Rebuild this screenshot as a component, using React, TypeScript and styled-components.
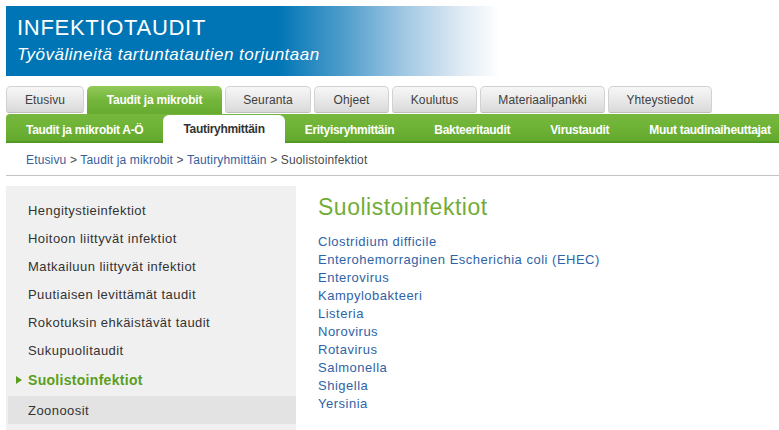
import styled, { createGlobalStyle } from 'styled-components';

const GlobalStyle = createGlobalStyle`
  html, body {
    margin: 0;
    padding: 0;
    background: #ffffff;
    font-family: "Liberation Sans", Arial, sans-serif;
  }
  a {
    text-decoration: none;
  }
`;

const Page = styled.div`
  padding: 6px 0 0 6px;
  width: 773px;
  height: 424px;
  overflow: hidden;
`;

const Banner = styled.header`
  width: 494px;
  height: 70px;
  box-sizing: border-box;
  padding: 9px 0 0 11px;
  color: #ffffff;
  background: linear-gradient(
    to right,
    #0075b5 0%,
    #0075b5 55%,
    #4d9ccb 68%,
    #9dc6e2 80%,
    #dfeaf4 92%,
    #ffffff 100%
  );
`;

const SiteTitle = styled.div`
  font-size: 22px;
  line-height: 26px;
  letter-spacing: 0.7px;
`;

const SiteSubtitle = styled.div`
  margin-top: 3px;
  font-size: 17px;
  line-height: 21px;
  font-style: italic;
  letter-spacing: 0.5px;
`;

const TopTabs = styled.nav`
  display: flex;
  gap: 3px;
  margin-top: 10px;
  height: 28px;
  align-items: flex-end;
`;

const TopTab = styled.a<{ $active?: boolean; $w: number }>`
  display: flex;
  align-items: center;
  justify-content: center;
  box-sizing: border-box;
  width: ${(p) => p.$w}px;
  font-size: 12px;
  letter-spacing: 0.1px;
  border-radius: 5px 5px 3px 3px;
  ${(p) =>
    p.$active
      ? `
    height: 28px;
    border-radius: 5px 5px 0 0;
    color: #ffffff;
    font-weight: bold;
    letter-spacing: -0.2px;
    background: linear-gradient(to bottom, #92ca5a 0%, #74b63c 50%, #66ab30 100%);
  `
      : `
    height: 27px;
    margin-bottom: 1px;
    color: #404040;
    background: linear-gradient(to bottom, #f7f7f7 0%, #e9e9e9 50%, #d9d9d9 100%);
    border: 1px solid #d2d2d2;
    border-bottom-color: #bdbdbd;
  `}
`;

const SubBar = styled.nav`
  display: flex;
  align-items: flex-end;
  height: 29px;
  box-sizing: border-box;
  border-radius: 4px 0 0 0;
  border-bottom: 2px solid #529a24;
  background: linear-gradient(to bottom, #76b83e 0%, #6cb134 60%, #62a82c 100%);
`;

const SubItem = styled.a<{ $active?: boolean }>`
  display: flex;
  align-items: center;
  padding: 0 20px 1px;
  font-size: 12px;
  font-weight: bold;
  letter-spacing: -0.3px;
  white-space: nowrap;
  color: ${(p) => (p.$active ? '#333333' : '#ffffff')};
  background: ${(p) => (p.$active ? '#ffffff' : 'transparent')};
  border-radius: 6px 6px 0 0;
  margin-bottom: -2px;
  height: ${(p) => (p.$active ? '27px' : '25px')};
`;

const Crumbs = styled.div`
  padding: 9px 0 7px 20px;
  font-size: 12px;
  line-height: 16px;
  letter-spacing: 0.15px;
  color: #4a4a4a;
  border-bottom: 1px solid #c4c4c4;
`;

const CrumbLink = styled.a`
  color: #36609c;
`;

const Body = styled.div`
  display: flex;
  margin-top: 10px;
`;

const Sidebar = styled.aside`
  width: 290px;
  height: 250px;
  padding-top: 10px;
  box-sizing: border-box;
  background: #f0f0f0;
  flex-shrink: 0;
`;

const SideItem = styled.a<{ $current?: boolean; $hover?: boolean }>`
  position: relative;
  display: flex;
  align-items: center;
  margin-left: 2px;
  padding-left: 20px;
  height: ${(p) => (p.$current ? '32px' : '28px')};
  font-size: ${(p) => (p.$current ? '14px' : '13px')};
  letter-spacing: ${(p) => (p.$current ? '0.3px' : '0.45px')};
  color: ${(p) => (p.$current ? '#5a9e1c' : '#333333')};
  font-weight: ${(p) => (p.$current ? 'bold' : 'normal')};
  background: ${(p) => (p.$hover ? '#e3e3e3' : 'transparent')};
`;

const Marker = styled.span`
  position: absolute;
  left: 8px;
  top: 12px;
  width: 0;
  height: 0;
  border-top: 4px solid transparent;
  border-bottom: 4px solid transparent;
  border-left: 6px solid #5a9e1c;
`;

const Main = styled.main`
  padding: 8px 0 0 22px;
`;

const Heading = styled.h1`
  margin: 0;
  font-size: 23px;
  line-height: 26px;
  letter-spacing: 0.5px;
  font-weight: normal;
  color: #72ad38;
`;

const LinkList = styled.ul`
  list-style: none;
  margin: 13px 0 0;
  padding: 0;
`;

const LinkRow = styled.li`
  font-size: 13px;
  line-height: 18px;
  letter-spacing: 0.5px;
`;

const ItemLink = styled.a`
  color: #2f63a6;
`;

const topTabs: [string, number][] = [
  ['Etusivu', 78],
  ['Taudit ja mikrobit', 135],
  ['Seuranta', 86],
  ['Ohjeet', 75],
  ['Koulutus', 85],
  ['Materiaalipankki', 125],
  ['Yhteystiedot', 104],
];

const subTabs = [
  'Taudit ja mikrobit A-Ö',
  'Tautiryhmittäin',
  'Erityisryhmittäin',
  'Bakteeritaudit',
  'Virustaudit',
  'Muut taudinaiheuttajat',
];

const sideItems = [
  'Hengitystieinfektiot',
  'Hoitoon liittyvät infektiot',
  'Matkailuun liittyvät infektiot',
  'Puutiaisen levittämät taudit',
  'Rokotuksin ehkäistävät taudit',
  'Sukupuolitaudit',
  'Suolistoinfektiot',
  'Zoonoosit',
];

const links = [
  'Clostridium difficile',
  'Enterohemorraginen Escherichia coli (EHEC)',
  'Enterovirus',
  'Kampylobakteeri',
  'Listeria',
  'Norovirus',
  'Rotavirus',
  'Salmonella',
  'Shigella',
  'Yersinia',
];

export default function App() {
  return (
    <>
      <GlobalStyle />
      <Page>
        <Banner>
          <SiteTitle>INFEKTIOTAUDIT</SiteTitle>
          <SiteSubtitle>Työvälineitä tartuntatautien torjuntaan</SiteSubtitle>
        </Banner>

        <TopTabs>
          {topTabs.map(([t, w]) => (
            <TopTab key={t} href="#" $w={w} $active={t === 'Taudit ja mikrobit'}>
              {t}
            </TopTab>
          ))}
        </TopTabs>

        <SubBar>
          {subTabs.map((t) => (
            <SubItem key={t} href="#" $active={t === 'Tautiryhmittäin'}>
              {t}
            </SubItem>
          ))}
        </SubBar>

        <Crumbs>
          <CrumbLink href="#">Etusivu</CrumbLink> &gt;{' '}
          <CrumbLink href="#">Taudit ja mikrobit</CrumbLink> &gt;{' '}
          <CrumbLink href="#">Tautiryhmittäin</CrumbLink> &gt; Suolistoinfektiot
        </Crumbs>

        <Body>
          <Sidebar>
            {sideItems.map((s) => (
              <SideItem
                key={s}
                href="#"
                $current={s === 'Suolistoinfektiot'}
                $hover={s === 'Zoonoosit'}
              >
                {s === 'Suolistoinfektiot' && <Marker />}
                {s}
              </SideItem>
            ))}
          </Sidebar>

          <Main>
            <Heading>Suolistoinfektiot</Heading>
            <LinkList>
              {links.map((l) => (
                <LinkRow key={l}>
                  <ItemLink href="#">{l}</ItemLink>
                </LinkRow>
              ))}
            </LinkList>
          </Main>
        </Body>
      </Page>
    </>
  );
}
